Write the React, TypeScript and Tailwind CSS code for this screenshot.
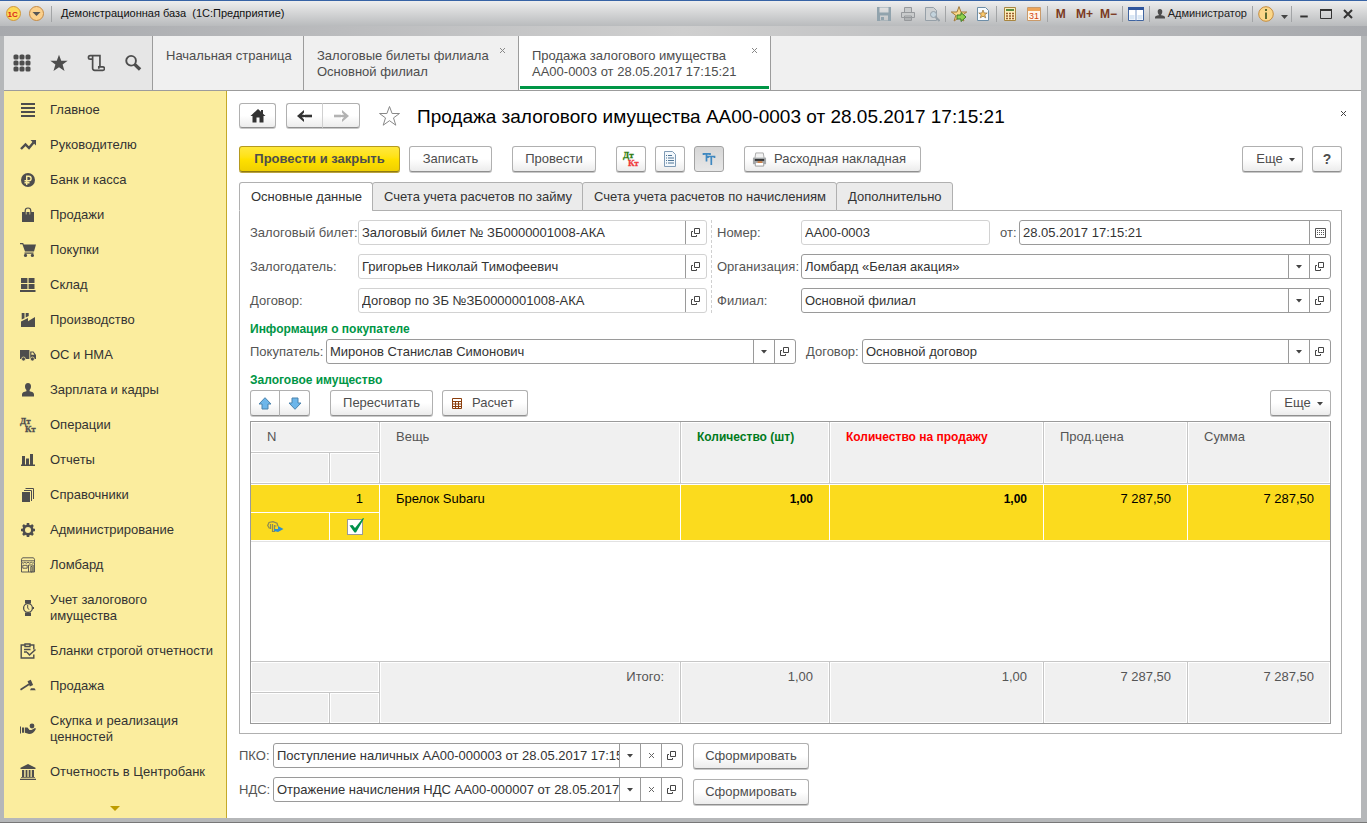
import { useState, type ReactNode } from 'react';
import clsx from 'clsx';

type FieldAction = 'drop' | 'clear' | 'open' | 'calendar';

function Svg({ children, size = 16, className }: { children: ReactNode; size?: number; className?: string }) {
  return (
    <svg width={size} height={size} viewBox="0 0 16 16" fill="currentColor" className={clsx('shrink-0', className)} aria-hidden="true">
      {children}
    </svg>
  );
}

function DtKt({ dt = 'currentColor', kt = 'currentColor' }: { dt?: string; kt?: string }) {
  return (
    <svg width="16" height="16" viewBox="0 0 16 16" className="shrink-0 overflow-visible" aria-hidden="true">
      <text x="0" y="7" fill={dt} stroke={dt} strokeWidth=".3" fontFamily="Liberation Serif, serif" fontWeight="bold" fontSize="9">Дт</text>
      <text x="5" y="15" fill={kt} stroke={kt} strokeWidth=".3" fontFamily="Liberation Serif, serif" fontWeight="bold" fontSize="9">Кт</text>
    </svg>
  );
}

const STAR = 'M8 0.6L10 6H15.7L11.2 9.4L12.9 15L8 11.7L3.1 15L4.8 9.4L0.3 6H6Z';

const sections: { title: string; icon: ReactNode }[] = [
  { title: 'Главное', icon: <Svg><path d="M1 1h14v2H1zM1 5h14v2H1zM1 9h14v2H1zM1 13h14v2H1z" /></Svg> },
  {
    title: 'Руководителю',
    icon: <Svg><path d="M1 12l4.5-4.5 3.5 3.5 4.5-5.5" fill="none" stroke="currentColor" strokeWidth="2.4" /><path d="M10.5 3H16v5.5z" /></Svg>,
  },
  {
    title: 'Банк и касса',
    icon: (
      <Svg>
        <circle cx="8" cy="8" r="7" />
        <path d="M6.7 13V4.2h2.1a2.2 2.2 0 010 4.6H4.5M4.5 10.8h5" fill="none" stroke="#fbed9e" strokeWidth="1.4" />
      </Svg>
    ),
  },
  {
    title: 'Продажи',
    icon: <Svg><path d="M2 5h12v10H2z" /><path d="M5.2 7.5V3.8a2.8 2.8 0 015.6 0v3.7" fill="none" stroke="currentColor" strokeWidth="1.2" /><path d="M6.2 5v2.5M9.800 5v2.500" stroke="#fbed9e" strokeWidth=".7" /></Svg>,
  },
  {
    title: 'Покупки',
    icon: <Svg><path d="M0 1h3.2l.6 1.6H16l-2 7H5L2.4 2.2H0zM4.5 10.5h9v1.2h-9z" /><circle cx="5.5" cy="13.4" r="1.6" /><circle cx="12.4" cy="13.4" r="1.6" /></Svg>,
  },
  { title: 'Склад', icon: <Svg><path d="M1 1h6.4v5H1zM8.6 1H14.5v5H8.6zM1 7h6.4v5H1zM8.6 7H14.5v5H8.6zM0 13h15.5v2H0z" /></Svg> },
  { title: 'Производство', icon: <Svg><path d="M1 15V9.5L8 6v3.200L15 5v10zM1.700 1h2.800v5.200L1.700 7.600zM5.700 1h3v3l-3 1.500z" /></Svg> },
  {
    title: 'ОС и НМА',
    icon: <Svg><path d="M0 3h9.4v9H0zM10.2 4.4h3.3L16 8v4h-5.8z" /><path d="M11.4 5.600h1.600l1.300 2.200h-2.900z" fill="#fbed9e" /><circle cx="3.5" cy="12" r="2" stroke="#fbed9e" strokeWidth=".7" /><circle cx="12.4" cy="12" r="2" stroke="#fbed9e" strokeWidth=".7" /></Svg>,
  },
  {
    title: 'Зарплата и кадры',
    icon: <Svg><path d="M8 1c2 0 3 1.400 3 3.200 0 1.600-.6 3-1.400 3.800v1.300c2.600.5 4.400 1.200 4.400 3.200V14.500H2v-2c0-2 1.800-2.700 4.400-3.200V8C5.600 7.200 5 5.800 5 4.200 5 2.400 6 1 8 1z" /></Svg>,
  },
  { title: 'Операции', icon: <DtKt /> },
  { title: 'Отчеты', icon: <Svg><path d="M2 4h3v8.500h1V6.500h3v6h1V2h3v10.500h2V14H1v-1.500h1z" /></Svg> },
  { title: 'Справочники', icon: <Svg><path d="M2 5h8v10H2z" /><path d="M4 3.500h7.500V14M5.500 1.500h8V12" fill="none" stroke="currentColor" /></Svg> },
  {
    title: 'Администрирование',
    icon: <Svg><circle cx="8" cy="8" r="4.300" fill="none" stroke="currentColor" strokeWidth="2.600" /><path d="M8 1v2.500M8 12.500V15M1 8h2.500M12.500 8H15M3 3l1.800 1.800M11.200 11.200L13 13M3 13l1.800-1.800M11.200 4.800L13 3" stroke="currentColor" strokeWidth="2.600" /></Svg>,
  },
  {
    title: 'Ломбард',
    icon: <Svg><path d="M1.500 5.500v9.500h13V5.500M2.500.800h11l1 1.500v3l-1.600.900-1.600-.9-1.600.9L8 5.300l-1.600.900-1.600-.9-1.600.9-1.700-.9v-3zM1.500 3.800h13M2.800 8.300h4.400v2.900H2.800zM8.500 8h4.700v7M8.500 8v7M10.800 9.500h1.300V15h-1.300z" fill="none" stroke="currentColor" strokeWidth=".9" /></Svg>,
  },
  {
    title: 'Учет залогового имущества',
    icon: <Svg><path d="M5 0h6v3.500H5zM5 12.500h6V16H5zM13 7h1v2h-1z" /><circle cx="8" cy="8" r="4.400" fill="none" stroke="currentColor" strokeWidth="1.300" /><path d="M7.700 5v3l1.300 1.700" fill="none" stroke="currentColor" /></Svg>,
  },
  {
    title: 'Бланки строгой отчетности',
    icon: <Svg><path d="M5 2H1.200v13h12.600v-3.500M13.800 6.500V2H10M5 1h5v2.500H5zM4 6.500h6.500M4 9h3" fill="none" stroke="currentColor" strokeWidth="1.400" /><path d="M7 9.300l2.500 2.700L15.500 6.500" fill="none" stroke="currentColor" strokeWidth="1.500" /></Svg>,
  },
  { title: 'Продажа', icon: <Svg><path d="M7.500 3.200l3.300-1.400 2.300 5.300-3.200 1.300zM10 12.300l1-2h3.500l1.300 2z" /><path d="M.500 11.700L9 6.300" stroke="currentColor" strokeWidth="1.700" /></Svg> },
  {
    title: 'Скупка и реализация ценностей',
    icon: <Svg><path d="M0 5.500h1v7H0zM2 6.500h2.200v5.300H2zM5 6.500h2.500l2 2.500h2l3.500-2 1 .8c-1.500 3.500-4 5.200-7 5.200L5 11.800z" /><circle cx="12" cy="5" r="2.400" /></Svg>,
  },
  { title: 'Отчетность в Центробанк', icon: <Svg><path d="M8 0l7.500 3.800v1.200H.5V3.800zM2 6h2.200v7H2zM5.600 6h1.800v7H5.600zM8.700 6h1.800v7H8.700zM11.800 6H14v7h-2.200zM1 13.200h14V14H1zM0 14.700h16V16H0z" /></Svg> },
];

const fieldIcons: Record<FieldAction, { label: string; icon: ReactNode }> = {
  drop: { label: 'Выбрать из списка', icon: <svg width="6" height="4"><path d="M0 0h6L3 3.500z" fill="#444" /></svg> },
  clear: { label: 'Очистить', icon: <svg width="7" height="7"><path d="M1 1l5 5M6 1L1 6" stroke="#666" /></svg> },
  open: {
    label: 'Открыть',
    icon: <svg width="10" height="9"><path d="M3.500.500h5v5h-5zM2 3.500H.500v5h5V7" fill="none" stroke="#444" /></svg>,
  },
  calendar: {
    label: 'Выбрать дату',
    icon: <svg width="11" height="10"><path d="M.500.500h10v9H.500z" fill="none" stroke="#555" /><path d="M2 2.500h7M2 4.500h7M2 6.500h7" stroke="#555" strokeDasharray="1 1" /></svg>,
  },
};

interface FieldProps {
  id: string;
  label: string;
  value: string;
  labelClass?: string;
  className?: string;
  muted?: boolean;
  actions?: FieldAction[];
}

function Field({ id, label, value, labelClass, className, muted, actions = [] }: FieldProps) {
  const [text, setText] = useState(value);
  return (
    <div className={clsx('flex h-[25px] min-w-0 items-center', className)}>
      <label htmlFor={id} className={clsx('shrink-0 whitespace-nowrap text-[#555]', labelClass)}>{label}</label>
      <div className={clsx('flex h-full min-w-0 flex-1 overflow-hidden rounded-[3px] border bg-white', muted ? 'border-[#d2d2d2]' : 'border-[#9a9a9a]')}>
        <input
          id={id}
          value={text}
          readOnly={muted}
          onChange={(e) => setText(e.target.value)}
          className="min-w-0 flex-1 bg-transparent pl-[3px] text-[#333] outline-none"
        />
        {actions.map((a) => (
          <button
            key={a}
            type="button"
            aria-label={fieldIcons[a].label}
            onClick={a === 'clear' ? () => setText('') : undefined}
            className="flex w-[21px] shrink-0 items-center justify-center border-l border-[#9a9a9a] hover:bg-gray-100"
          >
            {fieldIcons[a].icon}
          </button>
        ))}
      </div>
    </div>
  );
}

const buttonBase = 'flex shrink-0 items-center whitespace-nowrap rounded-[3px] border bg-linear-to-b';

const buttonTones = {
  plain: 'border-[#b0b0b0] border-b-[#8f8f8f] from-white from-50% to-[#ececec] text-[#4d4d4d] shadow-[0_1px_0_#c8c8c8] hover:to-[#e0e0e0]',
  primary: 'border-[#b59a1e] border-b-[#8f7a10] from-[#ffe83a] via-[#ffe100] to-[#f0d000] font-bold text-[#4d4d4d] shadow-[0_1px_0_#b9a240]',
  pressed: 'border-[#a3a3a3] from-[#d6d6d6] to-[#e8e8e8]',
};

interface ButtonProps {
  children: ReactNode;
  className?: string;
  label?: string;
  tone?: keyof typeof buttonTones;
  height?: string;
  align?: string;
}

function Button({ children, className, label, tone = 'plain', height = 'h-[26px]', align = 'justify-center' }: ButtonProps) {
  return <button type="button" aria-label={label} className={clsx(buttonBase, buttonTones[tone], height, align, className)}>{children}</button>;
}

function MoreButton() {
  return (
    <Button className="w-[61px] gap-[6px] pl-[6px]">
      Еще
      <svg width="6" height="4" className="mt-px"><path d="M0 0h6L3 3.500z" fill="#444" /></svg>
    </Button>
  );
}

function BarButton({ children, label, className = 'w-6' }: { children: ReactNode; label: string; className?: string }) {
  return <button type="button" aria-label={label} className={clsx('flex h-5 items-center justify-center', className)}>{children}</button>;
}

const BarLine = () => <span className="mx-px h-4 w-px bg-[#a2a4a6]" />;

function TitleBar() {
  return (
    <header className="h-[36px] border-t border-[#3763a5] bg-linear-to-r from-[#a7a9ad] via-[#cfcfcf] to-[#a7a9ad]">
      <div className="flex h-[25px] items-center bg-linear-to-b from-[#eeeeee] to-[#b9bbbd] pr-2 pl-[6px] text-[11px] text-[#111]">
        <svg width="15" height="15" viewBox="0 0 15 15" className="shrink-0">
          <circle cx="7.500" cy="7.500" r="7" fill="#fcd957" stroke="#d0973c" />
          <text x="1.500" y="10.500" fontSize="8" fontWeight="bold" fontFamily="Liberation Sans, sans-serif" fill="#d9271c">1С</text>
        </svg>
        <button type="button" aria-label="Меню" className="ml-2">
          <svg width="15" height="15" viewBox="0 0 15 15">
            <circle cx="7.500" cy="7.500" r="7" fill="#fbd08c" stroke="#c48a45" />
            <path d="M3.500 6h8l-4 4z" fill="#555" />
          </svg>
        </button>
        <span className="mx-[7px] h-4 w-px bg-[#a2a4a6]" />
        <span className="flex-1 whitespace-pre pl-[2px]">Демонстрационная база  (1С:Предприятие)</span>

        <BarButton label="Сохранить">
          <Svg className="text-[#91a3ad]"><path d="M1 1h14v14H1zM3.500 1.500v5h9v-5zM4 9.500v5h8v-5z" fillRule="evenodd" /><path d="M5 11h3v3H5z" /></Svg>
        </BarButton>
        <BarButton label="Печать">
          <Svg className="text-[#96999c]"><path d="M4.500 6V1.500h7V6M1.500 6.500h13v5h-13zM4.500 10h7v4.500h-7zM4 13h8" fill="#c9cbcc" stroke="currentColor" /></Svg>
        </BarButton>
        <BarButton label="Просмотр">
          <Svg className="text-[#96a0a8]"><path d="M1.500 1.500h8l3 3v10h-11z" fill="#cfd2d4" stroke="currentColor" /><circle cx="9.500" cy="8.500" r="3" fill="#c3d3dd" stroke="currentColor" /><path d="M11.500 11l4 4" stroke="currentColor" strokeWidth="2" /></Svg>
        </BarButton>
        <BarLine />
        <BarButton label="Добавить в избранное">
          <Svg><path d={STAR} fill="#fbd788" stroke="#a07a3c" /><path d="M6 9h4V6.500l5 4.500-5 4.500V13H6z" fill="#8ed04f" stroke="#3c7a27" /></Svg>
        </BarButton>
        <BarButton label="Избранное">
          <Svg><path d="M2.500 1.500h8l3 3v10h-11z" fill="#f7fbfe" stroke="#6d8ea8" /><path d="M8 4l1.200 3h3L9.800 8.800l.9 3L8 10.200l-2.700 1.600.9-3L3.800 7h3z" fill="#fbc96b" stroke="#8f6a33" strokeWidth=".7" /></Svg>
        </BarButton>
        <BarLine />
        <BarButton label="Калькулятор">
          <Svg><path d="M2.500 1.500h11v13h-11z" fill="#fdeebb" stroke="#a88641" /><path d="M4 4h8" stroke="#5c8a3f" strokeWidth="2" /><path d="M4 7.500h8M4 10h8M4 12.500h8" stroke="#9a5a2c" strokeWidth="1.400" strokeDasharray="2 1" /></Svg>
        </BarButton>
        <BarButton label="Календарь">
          <svg width="16" height="16" viewBox="0 0 16 16">
            <path d="M1.500 1.500h13v13h-13z" fill="#fff6ea" stroke="#c99a6a" />
            <path d="M2 2h12v3H2z" fill="#eda457" />
            <text x="3" y="13" fontSize="9" fontFamily="Liberation Sans, sans-serif" fill="#d3470f">31</text>
          </svg>
        </BarButton>
        <BarLine />
        <BarButton label="Память" className="w-6 text-[12px] font-bold text-[#7b3a22]">M</BarButton>
        <BarButton label="Прибавить к памяти" className="w-6 text-[12px] font-bold text-[#7b3a22]">M+</BarButton>
        <BarButton label="Вычесть из памяти" className="w-6 text-[12px] font-bold text-[#7b3a22]">M−</BarButton>
        <BarLine />
        <BarButton label="Панели">
          <Svg><path d="M.500 1.500h15v13H.500z" fill="#fff" stroke="#3f64a0" /><path d="M0 1h16v3H0z" fill="#2f559c" /><path d="M8 4v11" stroke="#7c9bc9" /><path d="M9.500 9h5v4.500h-5zM1.500 9h5v4.500h-5z" fill="#dbe8f5" /></Svg>
        </BarButton>
        <BarLine />
        <button type="button" className="flex h-5 items-center gap-[3px] px-1 text-[#222]">
          <svg width="10" height="10" viewBox="0 0 10 10"><path d="M5 0c1.500 0 2.300 1 2.300 2.400S6.700 5 6.200 5.400v.8C8.500 6.500 10 7 10 8.500V9.500H0v-1C0 7 1.500 6.500 3.800 6.200v-.8C3.300 5 2.700 3.800 2.700 2.400S3.500 0 5 0z" fill="#4d4d4d" /></svg>
          Администратор
        </button>
        <BarLine />
        <BarButton label="Информация">
          <Svg><circle cx="8" cy="8" r="7.300" fill="#fbd789" stroke="#c58d3e" /><path d="M7 3h2v2H7zM7 6.500h2V13H7z" fill="#5a6a30" /></Svg>
        </BarButton>
        <BarButton label="Еще" className="w-3 pt-[6px]"><svg width="7" height="4"><path d="M0 0h7L3.500 4z" fill="#444" /></svg></BarButton>
        <BarLine />
        <BarButton label="Свернуть" className="w-[22px]"><Svg size={12}><path d="M3 10h10v2.600H3z" fill="#333" /></Svg></BarButton>
        <BarButton label="Развернуть" className="w-[22px]"><svg width="12" height="10"><path d="M.500 1h11v8.500H.500z" fill="none" stroke="#333" /><path d="M0 1h12" stroke="#333" strokeWidth="2" /></svg></BarButton>
        <BarButton label="Закрыть" className="w-[22px]"><svg width="10" height="10"><path d="M1 1l8 8M9 1L1 9" stroke="#333" strokeWidth="2" /></svg></BarButton>
      </div>
    </header>
  );
}

function CloseMark({ className }: { className?: string }) {
  return (
    <button type="button" aria-label="Закрыть вкладку" className={className}>
      <svg width="7" height="7"><path d="M1 1l5 5M6 1L1 6" stroke="currentColor" /></svg>
    </button>
  );
}

function WindowTabs() {
  return (
    <div className="flex h-[55px] border-b border-[#9c9c9c] bg-[#f0f0f0] leading-4 text-[#4d4d4d]">
      <div className="flex w-[149px] shrink-0 items-center gap-[19px] border-r border-[#9c9c9c] bg-[#e6e6e6] pl-[9px]">
        <button type="button" aria-label="Все функции">
          <svg width="18" height="18" viewBox="0 0 18 18" fill="#4d4d4d">
            {[3, 9, 15].map((y) => [3, 9, 15].map((x) => <rect key={`${x}-${y}`} x={x - 2.5} y={y - 2.5} width="5" height="5" rx="1.600" />))}
          </svg>
        </button>
        <button type="button" aria-label="Избранное"><Svg size={18} className="text-[#4d4d4d]"><path d={STAR} /></Svg></button>
        <button type="button" aria-label="История">
          <Svg size={18} className="text-[#4d4d4d]"><path d="M4.500 4.500H2.800A1.500 1.500 0 012.800 1.500h8.700V11M5 2v10.500a1.800 1.800 0 001.800 2H14A1.500 1.500 0 0014 11.500h-3.500v1.500" fill="none" stroke="currentColor" strokeWidth="1.500" /></Svg>
        </button>
        <button type="button" aria-label="Поиск">
          <Svg size={18} className="text-[#4d4d4d]"><circle cx="6.300" cy="6" r="4.300" fill="none" stroke="currentColor" strokeWidth="1.700" /><path d="M9.500 9.200l4.800 4.600" stroke="currentColor" strokeWidth="3" /></Svg>
        </button>
      </div>
      <a href="#home" className="w-[151px] shrink-0 border-r border-[#9c9c9c] pt-3 pl-[13px]">Начальная страница</a>
      <div className="flex w-[215px] shrink-0 justify-between border-r border-[#9c9c9c] pt-3 pl-[13px]">
        <a href="#tickets">Залоговые билеты филиала<br />Основной филиал</a>
        <CloseMark className="mr-3 -mt-px h-[7px] text-[#888]" />
      </div>
      <div className="flex w-[252px] shrink-0 border-r border-[#9c9c9c] bg-white px-px pb-px">
        <div className="flex flex-1 justify-between border-b-[3px] border-[#009646] pt-3 pl-3">
          <a href="#sale">Продажа залогового имущества<br />АА00-0003 от 28.05.2017 17:15:21</a>
          <CloseMark className="mr-[11px] -mt-px h-[7px] text-[#888]" />
        </div>
      </div>
    </div>
  );
}

function Sidebar() {
  return (
    <nav className="flex w-[223px] shrink-0 flex-col border-r border-[#c4a92a] bg-[#fbed9e] pt-px text-[#333]">
      {sections.map((s) => (
        <a key={s.title} href="#section" className="flex items-center gap-[14px] py-[9px] pr-3 pl-4 leading-4 hover:bg-[#f5e079]">
          <span className="flex h-[17px] items-center text-[#4d4d4d]">{s.icon}</span>
          <span className={clsx('pt-px', s.title.length > 26 ? 'w-[130px]' : s.title.startsWith('Учет') && 'w-[110px]')}>{s.title}</span>
        </a>
      ))}
      <button type="button" aria-label="Прокрутить вниз" className="mt-auto flex justify-center pb-[7px]">
        <svg width="10" height="5"><path d="M0 0h10L5 5z" fill="#bd9c00" /></svg>
      </button>
    </nav>
  );
}

const formTabs = ['Основные данные', 'Счета учета расчетов по займу', 'Счета учета расчетов по начислениям', 'Дополнительно'];

const headCell = 'border-r border-b border-[#c6c6c6] bg-[#f0f0f0] px-4 pt-[7px] text-left align-top font-normal shadow-[inset_0_0_0_1px_#fff] last:border-r-0';
const rowCell = 'border-t border-r border-white px-4 pt-[6px] align-top last:border-r-0';
const footCell = 'border-t border-r border-[#c6c6c6] bg-[#f0f0f0] px-4 pt-[7px] align-top shadow-[inset_0_0_0_1px_#fff] last:border-r-0';

function GoodsTable() {
  return (
    <div className="border border-[#9a9a9a] bg-white">
      <table className="w-full table-fixed border-separate border-spacing-0 leading-4 text-[#555]">
        <colgroup>
          <col className="w-[79px]" />
          <col className="w-[50px]" />
          <col className="w-[301px]" />
          <col className="w-[149px]" />
          <col className="w-[214px]" />
          <col className="w-[144px]" />
          <col className="w-[142px]" />
        </colgroup>
        <thead>
          <tr className="h-[31px]">
            <th colSpan={2} className={headCell}>N</th>
            <th rowSpan={2} className={headCell}>Вещь</th>
            <th rowSpan={2} className={clsx(headCell, 'text-[12px] text-[#007a1c]')}><b>Количество (шт)</b></th>
            <th rowSpan={2} className={clsx(headCell, 'text-[12px] text-[#f00]')}><b>Количество на продажу</b></th>
            <th rowSpan={2} className={headCell}>Прод.цена</th>
            <th rowSpan={2} className={headCell}>Сумма</th>
          </tr>
          <tr className="h-[31px]">
            <th className={headCell} />
            <th className="border-r border-b border-[#c6c6c6] bg-[#f0f0f0] shadow-[inset_0_0_0_1px_#fff]" />
          </tr>
        </thead>
        <tbody>
          <tr className="h-[29px] bg-[#fbdb1e] text-right text-black">
            <td colSpan={2} className={clsx(rowCell, 'border-b')}>1</td>
            <td rowSpan={2} className={clsx(rowCell, 'border-b text-left')}>Брелок Subaru</td>
            <td rowSpan={2} className={clsx(rowCell, 'border-b text-[12px] font-bold')}>1,00</td>
            <td rowSpan={2} className={clsx(rowCell, 'border-b text-[12px] font-bold')}>1,00</td>
            <td rowSpan={2} className={clsx(rowCell, 'border-b')}>7 287,50</td>
            <td rowSpan={2} className={clsx(rowCell, 'border-b')}>7 287,50</td>
          </tr>
          <tr className="h-[28px] bg-[#fbdb1e]">
            <td className="border-r border-b border-white pl-4">
              <svg width="17" height="12" viewBox="0 0 17 12" fill="none">
                <path d="M2.500 7.500L.700 4.500 2 1.500 6 .700l4 1.500 1 3M3.500 3v5M5.500 3v7.500h2V4M7.500 5h2" stroke="#8b8a55" strokeWidth="1.200" />
                <path d="M7 8h4V5l5.500 3L11 11l-4-1z" fill="#2f8fd0" />
              </svg>
            </td>
            <td className="border-r border-b border-white">
              <label className="relative mx-auto flex size-4 border border-[#999] bg-white">
                <input type="checkbox" defaultChecked aria-label="Выбрано" className="peer size-full appearance-none" />
                <svg width="16" height="16" viewBox="0 0 16 16" className="pointer-events-none absolute -top-[2px] left-0 hidden peer-checked:block">
                  <path d="M1.500 7.500l3-.5L7 10 15 0l1 .5L8 14.500H6.500z" fill="#00914a" />
                </svg>
              </label>
            </td>
          </tr>
          <tr className="h-[120px]">
            <td colSpan={7} className="border-t border-[#e2e2e2]" />
          </tr>
        </tbody>
        <tfoot className="text-right">
          <tr className="h-[31px]">
            <td colSpan={2} className={footCell} />
            <td rowSpan={2} className={footCell}>Итого:</td>
            <td rowSpan={2} className={footCell}>1,00</td>
            <td rowSpan={2} className={footCell}>1,00</td>
            <td rowSpan={2} className={footCell}>7 287,50</td>
            <td rowSpan={2} className={footCell}>7 287,50</td>
          </tr>
          <tr className="h-[31px]">
            <td className={footCell} />
            <td className="border-t border-r border-[#c6c6c6] bg-[#f0f0f0] shadow-[inset_0_0_0_1px_#fff]" />
          </tr>
        </tfoot>
      </table>
    </div>
  );
}

function SaleForm() {
  const [tab, setTab] = useState(0);
  return (
    <main className="min-w-0 flex-1 bg-white pt-3 pr-[19px] pb-3 pl-3">
      <div className="flex h-[25px] items-center">
        <Button label="Домой" height="h-[25px]" className="w-[37px]">
          <svg width="16" height="14" viewBox="0 0 16 14"><path d="M8 0l3 2.800V1h2v3.700L15.500 7H13.500v6.500H9.500V8.500h-3v5h-4V7H.5z" fill="#333" /></svg>
        </Button>
        <div className="ml-[10px] flex">
          <Button label="Назад" height="h-[25px]" className="w-[37px] rounded-r-none border-r-[#d0d0d0]">
            <svg width="15" height="12"><path d="M7 0v12L0 6z" fill="#333" /><path d="M3 6h12" stroke="#333" strokeWidth="2.600" /><path d="M8 1.500L5 4.700h3zM8 10.500L5 7.300h3z" fill="#fff" /></svg>
          </Button>
          <Button label="Вперед" height="h-[25px]" className="-ml-px w-[38px] rounded-l-none border-l-[#d0d0d0]">
            <svg width="15" height="12"><path d="M8 0v12l7-6z" fill="#b3b3b3" /><path d="M0 6h12" stroke="#b3b3b3" strokeWidth="2.600" /><path d="M7 1.500l3 3.200H7zM7 10.500l3-3.200H7z" fill="#fff" /></svg>
          </Button>
        </div>
        <button type="button" aria-label="В избранное" className="ml-[18px]">
          <svg width="23" height="22" viewBox="0 0 23 22"><path d="M11.500 1.500l2.600 7h7.400l-6 4.400 2.300 7.300-6.300-4.500-6.300 4.500 2.300-7.300-6-4.400h7.400z" fill="#fff" stroke="#888" /></svg>
        </button>
        <h1 className="ml-4 pt-1 text-[19px] text-black">Продажа залогового имущества АА00-0003 от 28.05.2017 17:15:21</h1>
        <CloseMark className="-mr-[5px] mb-1 ml-auto text-[#444]" />
      </div>

      <div className="mt-[18px] flex items-center">
        <Button tone="primary" className="w-[161px]">Провести и закрыть</Button>
        <Button className="ml-[9px] w-[83px]">Записать</Button>
        <Button className="ml-5 w-[84px]">Провести</Button>
        <Button label="Дт Кт" className="ml-5 w-[30px]"><DtKt dt="#2f7d10" kt="#f03a3a" /></Button>
        <Button label="Отчет" className="ml-[9px] w-[30px]">
          <Svg><path d="M2.500.500h8l3 3v12h-11z" fill="#f3f8fc" stroke="#7f9bb5" /><path d="M4 4.500h1M6 4.500h4M4 7h1M6 7h6M4 9.500h1M6 9.500h6M4 12h1M6 12h6" stroke="#4f7596" strokeWidth="1.200" /></Svg>
        </Button>
        <Button tone="pressed" label="Текст" className="ml-[9px] w-[30px]">
          <Svg><path d="M2.500 4V2.800h6.500V4M5.500 2.500v8M7 7V5.500h6.500V7M10.300 5.500v8.500" fill="none" stroke="#3f88c0" strokeWidth="1.700" /></Svg>
        </Button>
        <Button align="justify-start" className="ml-5 w-[177px] gap-[7px] pl-[7px]">
          <Svg size={15}><path d="M4 1h8l1 6H3z" fill="#f3f3f3" stroke="#aaa" /><path d="M1 6h14v7H1z" fill="#a5a8aa" /><path d="M3 7.500h10v2H3z" fill="#333" /><path d="M3.500 11h9v4h-9z" fill="#fff" stroke="#999" /><path d="M6 10h5v1.500H6z" fill="#d9772e" /></Svg>
          Расходная накладная
        </Button>
        <div className="ml-auto flex gap-[9px]">
          <MoreButton />
          <Button className="w-[30px] text-[14px] font-bold">?</Button>
        </div>
      </div>

      <div role="tablist" className="relative z-10 mt-[10px] -mb-px flex h-[29px]">
        {formTabs.map((t, i) => (
          <button
            key={t}
            type="button"
            role="tab"
            aria-selected={tab === i}
            onClick={() => setTab(i)}
            className={clsx(
              '-mr-px whitespace-nowrap rounded-t-[3px] border border-[#b0b0b0] pr-[10px] pl-[11px] text-[#333]',
              tab === i ? 'border-b-white bg-white' : 'bg-[#ebebeb]',
            )}
          >
            {t}
          </button>
        ))}
      </div>

      <section className="border border-[#b0b0b0] px-[10px] pt-[9px] pb-[9px]">
        <div className="grid grid-cols-[minmax(0,457fr)_minmax(0,620fr)] gap-x-1">
          <div className="flex flex-col gap-[9px]">
            <Field id="ticket" label="Залоговый билет:" labelClass="w-[108px]" value="Залоговый билет № ЗБ0000001008-АКА" muted actions={['open']} />
            <Field id="pledger" label="Залогодатель:" labelClass="w-[108px]" value="Григорьев Николай Тимофеевич" muted actions={['open']} />
            <Field id="contract" label="Договор:" labelClass="w-[108px]" value="Договор по ЗБ №ЗБ0000001008-АКА" muted actions={['open']} />
          </div>
          <div className="flex flex-col gap-[9px] border-l border-dashed border-[#d0d0d0] pl-[5px]">
            <div className="flex gap-[10px]">
              <Field id="number" label="Номер:" labelClass="w-[84px]" className="w-[273px]" value="АА00-0003" muted />
              <Field id="date" label="от:" labelClass="w-[19px]" className="flex-1" value="28.05.2017 17:15:21" actions={['calendar']} />
            </div>
            <Field id="org" label="Организация:" labelClass="w-[84px]" value="Ломбард «Белая акация»" actions={['drop', 'open']} />
            <Field id="branch" label="Филиал:" labelClass="w-[84px]" value="Основной филиал" actions={['drop', 'open']} />
          </div>
        </div>

        <h2 className="mt-2 h-[18px] text-[12px] leading-4 font-bold text-[#009646]">Информация о покупателе</h2>
        <div className="grid grid-cols-[minmax(0,546fr)_minmax(0,525fr)] gap-x-[10px]">
          <Field id="buyer" label="Покупатель:" labelClass="w-[76px]" value="Миронов Станислав Симонович" actions={['drop', 'open']} />
          <Field id="buyer-contract" label="Договор:" labelClass="w-[56px]" value="Основной договор" actions={['drop', 'open']} />
        </div>

        <h2 className="mt-2 h-[18px] text-[12px] leading-4 font-bold text-[#009646]">Залоговое имущество</h2>
        <div className="flex items-center">
          <Button label="Вверх" className="w-[30px] rounded-r-none">
            <svg width="14" height="13"><path d="M7 .700L13 7h-3v5H4V7H1z" fill="#6db6ea" stroke="#4a83ad" /></svg>
          </Button>
          <Button label="Вниз" className="-ml-px w-[31px] rounded-l-none">
            <svg width="14" height="13"><path d="M7 12.300L1 6h3V1h6v5h3z" fill="#6db6ea" stroke="#4a83ad" /></svg>
          </Button>
          <Button className="ml-5 w-[103px]">Пересчитать</Button>
          <Button align="justify-start" className="ml-[9px] w-[86px] gap-[10px] pl-[9px]">
            <svg width="10" height="11"><path d="M.500.500h9v10h-9zM.500 3.500h9M.500 6h9M.500 8.500h9M3.500 3.500v7M6.500 3.500v7" fill="none" stroke="#8b3e0c" /></svg>
            Расчет
          </Button>
          <div className="ml-auto"><MoreButton /></div>
        </div>
        <div className="mt-[5px]"><GoodsTable /></div>
      </section>

      <div className="mt-[9px] flex items-start gap-[10px]">
        <div className="flex w-[444px] flex-col gap-[9px]">
          <Field id="pko" label="ПКО:" labelClass="w-[34px]" value="Поступление наличных АА00-000003 от 28.05.2017 17:15:21" actions={['drop', 'clear', 'open']} />
          <Field id="nds" label="НДС:" labelClass="w-[34px]" value="Отражение начисления НДС АА00-000007 от 28.05.2017 17:15:21" actions={['drop', 'clear', 'open']} />
        </div>
        <div className="flex w-[116px] flex-col gap-[10px]">
          <Button>Сформировать</Button>
          <Button>Сформировать</Button>
        </div>
      </div>
    </main>
  );
}

export default function App() {
  return (
    <div className="flex min-h-screen flex-col border-b border-[#777] bg-[#b5b7b9] font-['Liberation_Sans',Arial,sans-serif] text-[13px]">
      <TitleBar />
      <div className="mr-[6px] mb-1 ml-1 flex flex-1 flex-col">
        <WindowTabs />
        <div className="flex flex-1">
          <Sidebar />
          <SaleForm />
        </div>
      </div>
    </div>
  );
}
